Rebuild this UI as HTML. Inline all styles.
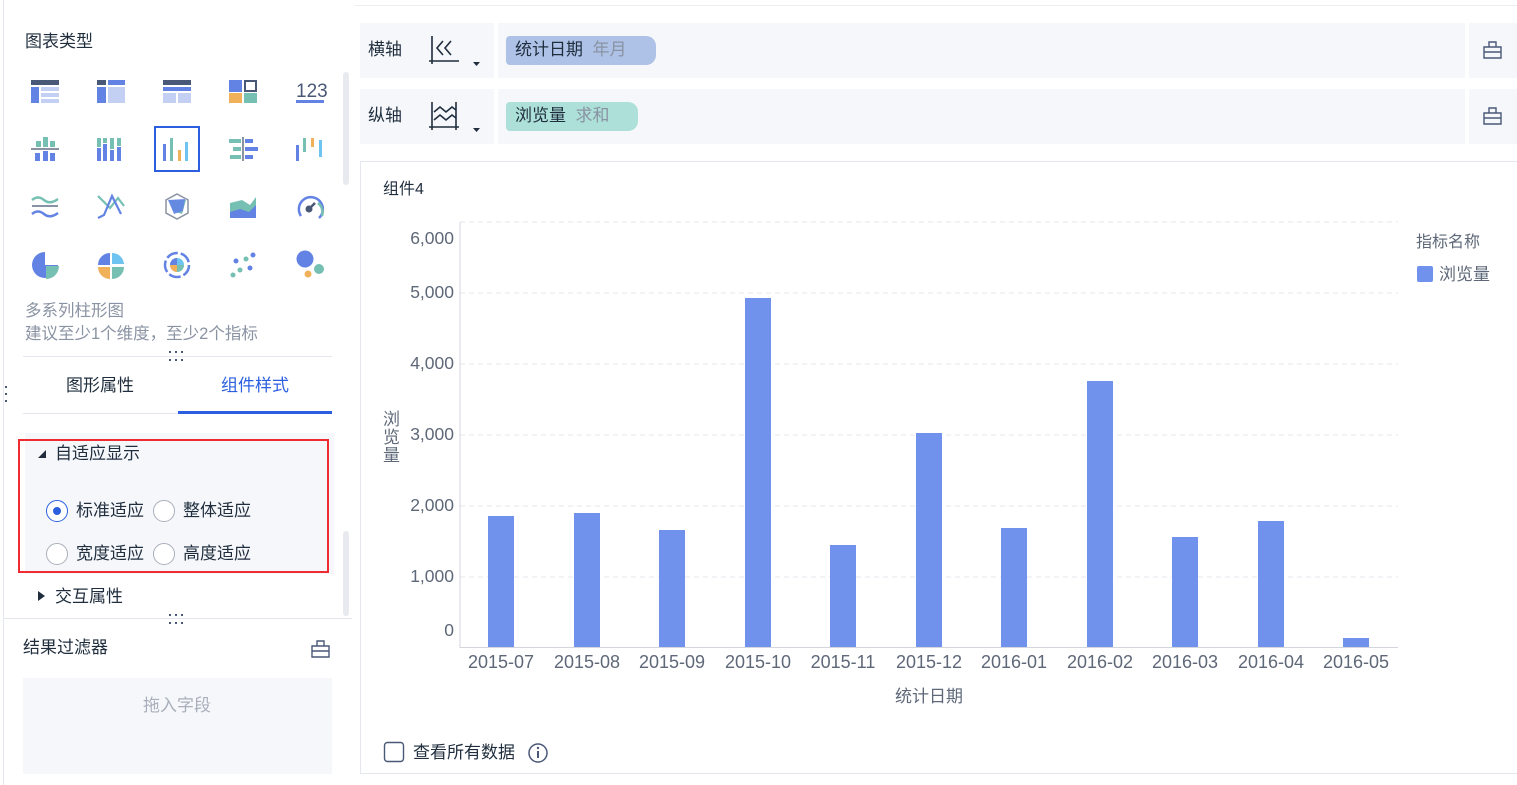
<!DOCTYPE html>
<html><head><meta charset="utf-8"><style>
*{margin:0;padding:0;box-sizing:border-box}
body{width:1517px;height:785px;background:#fff;font-family:"Liberation Sans","Noto Sans CJK SC",sans-serif;position:relative;overflow:hidden;color:#1f2d3d}
.a{position:absolute}
.t{font-size:17px;color:#1f2d3d;white-space:nowrap;line-height:20px}
.g{color:#8a93a3}
.dots{position:absolute;width:16px;height:12px}
.dots i{position:absolute;width:2px;height:2px;background:#4a5878}
</style></head><body>
<!-- left panel -->
<div class="a" style="left:3px;top:0;width:1px;height:785px;background:#e4e7ee"></div>
<div class="a t" style="left:25px;top:32px">图表类型</div>
<div class="a" style="left:343px;top:72px;width:6px;height:113px;background:#e8eaef;border-radius:3px"></div>
<div class="a" style="left:343px;top:531px;width:6px;height:85px;background:#e8eaef;border-radius:3px"></div>
<svg class="a" style="left:0;top:60px" width="340" height="240" viewBox="0 60 340 240">
<rect x="31" y="80" width="28" height="5" fill="#4a5878"/><rect x="31" y="87" width="8" height="16" fill="#6383e4"/><rect x="41" y="87" width="18" height="4" fill="#c3cff3"/><rect x="41" y="93" width="18" height="4" fill="#c3cff3"/><rect x="41" y="99" width="18" height="4" fill="#c3cff3"/>
<rect x="97" y="80" width="9" height="5" fill="#4a5878"/><rect x="108" y="80" width="17" height="5" fill="#6383e4"/><rect x="97" y="87" width="9" height="16" fill="#6383e4"/><rect x="108" y="87" width="17" height="16" fill="#c3cff3"/>
<rect x="163" y="80" width="28" height="5" fill="#4a5878"/><rect x="163" y="87" width="28" height="4" fill="#6383e4"/><rect x="163" y="93" width="13" height="10" fill="#c3cff3"/><rect x="178" y="93" width="13" height="10" fill="#c3cff3"/>
<rect x="229" y="80" width="13" height="12" fill="#6383e4"/><rect x="245" y="81" width="11" height="10" fill="none" stroke="#4a5878" stroke-width="2"/><rect x="229" y="93" width="13" height="10" fill="#f0b15a"/><rect x="244" y="93" width="13" height="10" fill="#76bfb3"/>
<text x="296" y="97" font-size="19" fill="#4a5878" font-family="Liberation Sans">123</text><rect x="296" y="100" width="28" height="3" fill="#6383e4"/>
<rect x="36" y="141" width="5" height="6" fill="#76bfb3"/><rect x="43" y="137" width="5" height="10" fill="#76bfb3"/><rect x="50" y="141" width="5" height="6" fill="#76bfb3"/><rect x="31" y="148" width="28" height="2" fill="#8a93a3"/><rect x="35" y="153" width="5" height="8" fill="#6383e4"/><rect x="43" y="151" width="5" height="10" fill="#6383e4"/><rect x="50" y="153" width="5" height="8" fill="#6383e4"/>
<g fill="#6383e4"><rect x="97" y="148" width="4" height="13"/><rect x="103" y="144" width="4" height="17"/><rect x="110" y="150" width="4" height="11"/><rect x="117" y="147" width="4" height="14"/></g><g fill="#76bfb3"><rect x="97" y="138" width="4" height="9"/><rect x="103" y="138" width="4" height="5"/><rect x="110" y="138" width="4" height="11"/><rect x="117" y="138" width="4" height="8"/></g>
<rect x="155" y="127" width="44" height="44" fill="#fff" stroke="#2b5fe0" stroke-width="2"/>
<rect x="163" y="144" width="3" height="17" fill="#6383e4"/><rect x="170" y="138" width="3" height="23" fill="#76bfb3"/><rect x="178" y="150" width="3" height="11" fill="#f0b15a"/><rect x="185" y="142" width="3" height="19" fill="#6ec3f0"/>
<rect x="242" y="137" width="2" height="24" fill="#8a93a3"/><rect x="229" y="139" width="12" height="4" fill="#76bfb3"/><rect x="233" y="147" width="8" height="4" fill="#76bfb3"/><rect x="230" y="155" width="11" height="4" fill="#76bfb3"/><rect x="245" y="139" width="8" height="4" fill="#6383e4"/><rect x="245" y="147" width="13" height="4" fill="#6383e4"/><rect x="245" y="155" width="8" height="4" fill="#6383e4"/>
<rect x="296" y="145" width="3" height="16" fill="#6383e4"/><rect x="303" y="138" width="3" height="14" fill="#76bfb3"/><rect x="311" y="138" width="3" height="9" fill="#f0b15a"/><rect x="319" y="140" width="3" height="17" fill="#6ec3f0"/>
<path d="M32 200 q6-5 12 0 t14-1" fill="none" stroke="#76bfb3" stroke-width="2.5"/><rect x="32" y="205" width="26" height="2" fill="#8a93a3"/><path d="M32 214 q6-5 12 0 t14-1" fill="none" stroke="#6383e4" stroke-width="2.5"/>
<path d="M98 196 l12 12 l8-10 l6 8" fill="none" stroke="#76bfb3" stroke-width="2.2"/><path d="M98 218 l6-3 l8-19 l9 18" fill="none" stroke="#6383e4" stroke-width="2.2"/>
<polygon points="177,194 188,200 188,213 177,219 166,213 166,200" fill="none" stroke="#8a93a3" stroke-width="1.5"/><polygon points="169,200 186,200 182,214 173,211" fill="#76bfb3"/><polygon points="168,200 185,199 183,211 174,214" fill="#6383e4" opacity=".9"/>
<polygon points="230,203 242,200 250,205 256,197 256,218 230,218" fill="#76bfb3"/><polygon points="230,212 240,209 249,212 256,205 256,218 230,218" fill="#6383e4"/>
<path d="M301 216 a12 12 0 1 1 18 2" fill="none" stroke="#6383e4" stroke-width="2.5"/><path d="M318 203 a12 12 0 0 1 4 13" fill="none" stroke="#76bfb3" stroke-width="2.5"/><circle cx="309" cy="209" r="3.5" fill="#4a5878"/><path d="M309 209 l6-6" stroke="#4a5878" stroke-width="2.5"/>
<path d="M45 252 a13 13 0 1 0 13 13 h-13z" fill="#6383e4"/><path d="M46 266 h13 a13 13 0 0 1 -13 13z" fill="#76bfb3"/>
<path d="M110 253 a12 12 0 0 0 -12 12 h12z" fill="#6383e4"/><path d="M112 253 a12 12 0 0 1 12 11 h-12z" fill="#6ec3f0"/><path d="M110 267 h-12 a12 12 0 0 0 12 12z" fill="#f0b15a"/><path d="M112 267 h12 a12 12 0 0 1 -12 12z" fill="#76bfb3"/>
<circle cx="177" cy="265" r="12" fill="none" stroke="#6383e4" stroke-width="2.5" stroke-dasharray="12 3"/><circle cx="177" cy="265" r="7" fill="#6ec3f0"/><path d="M177 258 a7 7 0 0 0 -7 7 h7z" fill="#6383e4"/><path d="M177 265 v7 a7 7 0 0 0 7-7z" fill="#76bfb3"/><path d="M170 265 a7 7 0 0 0 7 7 v-7z" fill="#f0b15a"/>
<g fill="#6383e4"><circle cx="236" cy="261" r="2.5"/><circle cx="253" cy="255" r="2.5"/><circle cx="250" cy="268" r="2.5"/></g><g fill="#76bfb3"><circle cx="246" cy="259" r="2.5"/><circle cx="240" cy="270" r="2.5"/><circle cx="233" cy="275" r="2.5"/></g>
<circle cx="305" cy="259" r="8.5" fill="#6383e4"/><circle cx="319" cy="269" r="5" fill="#76bfb3"/><circle cx="308" cy="274" r="3.5" fill="#f0b15a"/>
</svg>
<div class="a t g" style="left:25px;top:301px;font-size:16.5px">多系列柱形图</div>
<div class="a t g" style="left:25px;top:324px;font-size:16.5px">建议至少1个维度，至少2个指标</div>
<div class="dots" style="left:169px;top:351px"><i style="left:0;top:0"></i><i style="left:6px;top:0"></i><i style="left:12px;top:0"></i><i style="left:0;top:8px"></i><i style="left:6px;top:8px"></i><i style="left:12px;top:8px"></i></div>
<div class="a" style="left:23px;top:356px;width:309px;height:1px;background:#e4e7ee"></div>
<div class="dots" style="left:5px;top:386px;width:3px;height:20px"><i style="left:0;top:0"></i><i style="left:0;top:7px"></i><i style="left:0;top:14px"></i></div>
<div class="a t" style="left:66px;top:376px">图形属性</div>
<div class="a t" style="left:221px;top:376px;color:#2b5fe0">组件样式</div>
<div class="a" style="left:23px;top:413px;width:309px;height:1px;background:#e4e7ee"></div>
<div class="a" style="left:178px;top:411px;width:154px;height:3px;background:#2b5fe0"></div>
<div class="a" style="left:25px;top:433px;width:309px;height:141px;background:#f5f7fb"></div>
<div class="a" style="left:18px;top:439px;width:311px;height:134px;border:2px solid #f02c32"></div>
<div class="a" style="left:38px;top:450px;width:0;height:0;border-left:8px solid transparent;border-bottom:8px solid #1f2d3d"></div>
<div class="a t" style="left:55px;top:444px">自适应显示</div>
<div class="a" style="left:46px;top:500px;width:22px;height:22px;border:1px solid #2b5fe0;border-radius:50%;background:#fff"></div>
<div class="a" style="left:53px;top:507px;width:8px;height:8px;border-radius:50%;background:#2b5fe0"></div>
<div class="a t" style="left:76px;top:501px">标准适应</div>
<div class="a" style="left:153px;top:500px;width:22px;height:22px;border:1px solid #a9afba;border-radius:50%;background:#fff"></div>
<div class="a t" style="left:183px;top:501px">整体适应</div>
<div class="a" style="left:46px;top:543px;width:22px;height:22px;border:1px solid #a9afba;border-radius:50%;background:#fff"></div>
<div class="a t" style="left:76px;top:544px">宽度适应</div>
<div class="a" style="left:153px;top:543px;width:22px;height:22px;border:1px solid #a9afba;border-radius:50%;background:#fff"></div>
<div class="a t" style="left:183px;top:544px">高度适应</div>
<div class="a" style="left:38px;top:591px;width:0;height:0;border-top:5px solid transparent;border-bottom:5px solid transparent;border-left:7px solid #1f2d3d"></div>
<div class="a t" style="left:55px;top:587px">交互属性</div>
<div class="dots" style="left:169px;top:614px"><i style="left:0;top:0"></i><i style="left:6px;top:0"></i><i style="left:12px;top:0"></i><i style="left:0;top:8px"></i><i style="left:6px;top:8px"></i><i style="left:12px;top:8px"></i></div>
<div class="a" style="left:3px;top:618px;width:349px;height:1px;background:#e4e7ee"></div>
<div class="a t" style="left:23px;top:638px">结果过滤器</div>
<svg class="a" style="left:311px;top:640px" width="19" height="18"><path d="M6 1h7v5h-7z M1 6h17v11h-17z M1 11h17" fill="none" stroke="#4a5878" stroke-width="1.4"/></svg>
<div class="a" style="left:23px;top:678px;width:309px;height:96px;background:#f5f7fb"></div>
<div class="a t" style="left:143px;top:696px;color:#a9afba">拖入字段</div>

<!-- right top -->
<div class="a" style="left:355px;top:5px;width:1162px;height:1px;background:#eceef2"></div>
<div class="a" style="left:360px;top:23px;width:1157px;height:55px;background:#f5f7fb"></div>
<div class="a" style="left:360px;top:89px;width:1157px;height:55px;background:#f5f7fb"></div>
<div class="a" style="left:494px;top:23px;width:4px;height:121px;background:#fff"></div>
<div class="a" style="left:1465px;top:23px;width:4px;height:121px;background:#fff"></div>
<div class="a" style="left:360px;top:78px;width:1157px;height:11px;background:#fff"></div>
<div class="a t" style="left:368px;top:40px">横轴</div>
<div class="a t" style="left:368px;top:106px">纵轴</div>
<svg class="a" style="left:428px;top:34px" width="56" height="36"><path d="M4 2v28 M1 27h30 M15 7l-6 7l6 7 M23 7l-6 7l6 7" fill="none" stroke="#1f2d3d" stroke-width="1.6"/><path d="M45 28h7l-3.5 4z" fill="#1f2d3d"/></svg>
<svg class="a" style="left:428px;top:100px" width="56" height="36"><path d="M4 2v28 M1 27h30 M28 2v28 M6 12l6-5l6 5l6-5l4 3 M6 20l6-5l6 5l6-5l4 3" fill="none" stroke="#1f2d3d" stroke-width="1.6"/><path d="M45 28h7l-3.5 4z" fill="#1f2d3d"/></svg>
<div class="a" style="left:506px;top:36px;width:150px;height:29px;background:#adc2e6;border-radius:4px 10px 10px 4px"></div>
<div class="a t" style="left:515px;top:40px">统计日期 <span class="g">&nbsp;年月</span></div>
<div class="a" style="left:506px;top:102px;width:132px;height:29px;background:#ade0d8;border-radius:4px 10px 10px 4px"></div>
<div class="a t" style="left:515px;top:106px">浏览量 <span class="g">&nbsp;求和</span></div>
<svg class="a" style="left:1483px;top:41px" width="19" height="18"><path d="M6 1h7v5h-7z M1 6h17v11h-17z M1 11h17" fill="none" stroke="#4a5878" stroke-width="1.4"/></svg>
<svg class="a" style="left:1483px;top:107px" width="19" height="18"><path d="M6 1h7v5h-7z M1 6h17v11h-17z M1 11h17" fill="none" stroke="#4a5878" stroke-width="1.4"/></svg>

<!-- chart card -->
<div class="a" style="left:360px;top:161px;width:1160px;height:613px;border:1px solid #e4e7ee"></div>
<div class="a t" style="left:383px;top:180px;font-size:16px">组件4</div>
<svg class="a" style="left:0;top:0" width="1517" height="785" font-family="Liberation Sans,Noto Sans CJK SC,sans-serif">
<g stroke="#e4e7ee" stroke-dasharray="5 4"><line x1="460" y1="222" x2="1398" y2="222"/><line x1="460" y1="293" x2="1398" y2="293"/><line x1="460" y1="364" x2="1398" y2="364"/><line x1="460" y1="435" x2="1398" y2="435"/><line x1="460" y1="506" x2="1398" y2="506"/><line x1="460" y1="577" x2="1398" y2="577"/></g>
<line x1="460" y1="222" x2="460" y2="648" stroke="#d3d6dc"/><line x1="460" y1="647.5" x2="1398" y2="647.5" stroke="#d3d6dc"/>
<g font-size="17.5" fill="#5e6878" text-anchor="end"><text x="454" y="244">6,000</text><text x="454" y="298">5,000</text><text x="454" y="369">4,000</text><text x="454" y="440">3,000</text><text x="454" y="511">2,000</text><text x="454" y="582">1,000</text><text x="454" y="636">0</text></g>
<g fill="#7092ec"><rect x="488" y="516" width="26" height="131"/><rect x="574" y="513" width="26" height="134"/><rect x="659" y="530" width="26" height="117"/><rect x="745" y="298" width="26" height="349"/><rect x="830" y="545" width="26" height="102"/><rect x="916" y="433" width="26" height="214"/><rect x="1001" y="528" width="26" height="119"/><rect x="1087" y="381" width="26" height="266"/><rect x="1172" y="537" width="26" height="110"/><rect x="1258" y="521" width="26" height="126"/><rect x="1343" y="638" width="26" height="9"/></g>
<g font-size="18" fill="#5e6878" text-anchor="middle"><text x="501" y="668">2015-07</text><text x="587" y="668">2015-08</text><text x="672" y="668">2015-09</text><text x="758" y="668">2015-10</text><text x="843" y="668">2015-11</text><text x="929" y="668">2015-12</text><text x="1014" y="668">2016-01</text><text x="1100" y="668">2016-02</text><text x="1185" y="668">2016-03</text><text x="1271" y="668">2016-04</text><text x="1356" y="668">2016-05</text></g>
<text x="929" y="702" font-size="17" fill="#5e6878" text-anchor="middle">统计日期</text>
<g font-size="17" fill="#5e6878"><text x="383" y="425">浏</text><text x="383" y="443">览</text><text x="383" y="461">量</text></g>
<text x="1416" y="247" font-size="16" fill="#5e6878">指标名称</text>
<rect x="1417" y="266" width="16" height="16" rx="2" fill="#7092ec"/><text x="1439" y="280" font-size="17" fill="#5e6878">浏览量</text>
<rect x="384.5" y="742.5" width="19" height="19" rx="3" fill="none" stroke="#4a5878" stroke-width="1.4"/>
<text x="413" y="758" font-size="17" fill="#1f2d3d">查看所有数据</text>
<circle cx="538" cy="753" r="9" fill="none" stroke="#4a5878" stroke-width="1.5"/><rect x="537" y="751" width="2" height="7" fill="#4a5878"/><circle cx="538" cy="748" r="1.2" fill="#4a5878"/>
</svg>
</body></html>
